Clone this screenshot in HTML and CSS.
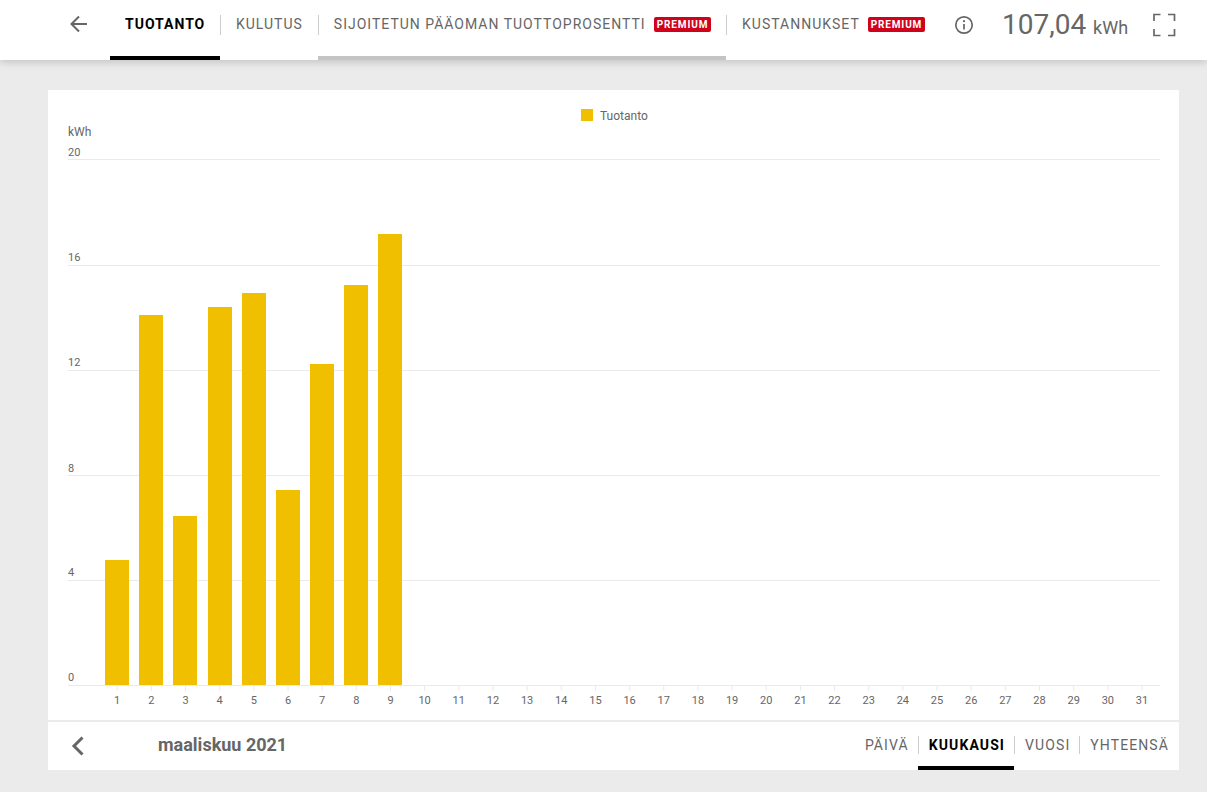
FILE: index.html
```html
<!DOCTYPE html>
<html lang="fi">
<head>
    <meta charset="UTF-8">
    <title>Tuotanto</title>
    <link rel="stylesheet" href="styles.css">
</head>
<body>
    <header class="topbar">
        <button class="back-btn" aria-label="Takaisin">
            <svg width="24" height="24" viewBox="0 0 24 24"><path class="icon-stroke" d="M20 12H5M12 4.5 4.5 12l7.5 7.5"/></svg>
        </button>
        <nav class="tabs">
            <a class="tab tab-active">TUOTANTO</a>
            <a class="tab tab-sep">KULUTUS</a>
            <a class="tab tab-sep tab-locked">SIJOITETUN PÄÄOMAN TUOTTOPROSENTTI <span class="badge">PREMIUM</span></a>
            <a class="tab tab-sep">KUSTANNUKSET <span class="badge">PREMIUM</span></a>
        </nav>
        <div class="summary">
            <svg class="info" width="20" height="20" viewBox="0 0 20 20">
                <circle class="icon-thin" cx="10" cy="10" r="8.2"/>
                <path class="icon-thin" d="M10 9v5.5"/>
                <circle class="icon-dot" cx="10" cy="6.2" r="1.1"/>
            </svg>
            <div class="total">107,04 <span class="unit">kWh</span></div>
            <svg class="expand" width="24" height="24" viewBox="0 0 24 24">
                <path class="icon-thin" d="M2 8V1.5h6.5M16 1.5h6.5V8M2 16v6.5h6.5M16 22.500h6.5V16"/>
            </svg>
        </div>
    </header>

    <main class="card">
        <div class="chart">
            <svg class="plot" id="plot" width="1131" height="630" viewBox="48 90 1131 630"></svg>
        </div>
        <footer class="card-foot">
            <button class="prev-btn" aria-label="Edellinen">
                <svg width="16" height="24" viewBox="0 0 16 24"><path class="icon-bold" d="M12.5 3.5 4 12l8.5 8.5"/></svg>
            </button>
            <div class="period">maaliskuu 2021</div>
            <nav class="ranges">
                <a class="range">PÄIVÄ</a>
                <a class="range range-sep range-active">KUUKAUSI</a>
                <a class="range range-sep">VUOSI</a>
                <a class="range range-sep">YHTEENSÄ</a>
            </nav>
        </footer>
    </main>

    <script src="chart.js"></script>
</body>
</html>
```

FILE: styles.css
```css
* {
    box-sizing: border-box;
}
body {
    margin: 0;
    height: 792px;
    overflow: hidden;
    font-family: Roboto, Arial, sans-serif;
    background-color: #ebebeb;
    color: #666;
}
button {
    background: none;
    border: none;
    padding: 0;
    display: flex;
}
.icon-stroke {
    fill: none;
    stroke: #666;
    stroke-width: 2;
}
.icon-thin {
    fill: none;
    stroke: #666;
    stroke-width: 1.7;
}
.icon-dot {
    fill: #666;
}
.icon-bold {
    fill: none;
    stroke: #666;
    stroke-width: 3;
}

/* top bar */
.topbar {
    height: 60px;
    background-color: white;
    display: flex;
    box-shadow: 0 2px 8px rgba(0, 0, 0, 0.18);
    position: relative;
}
.back-btn {
    margin: 12px 0 0 67px;
    height: 24px;
}
.tabs {
    display: flex;
    margin-left: 19px;
}
.tab {
    display: block;
    position: relative;
    height: 60px;
    padding: 16px 15px 0 16px;
    font-size: 14px;
    line-height: 16px;
    letter-spacing: 1px;
    white-space: nowrap;
}
.tab-active {
    width: 110px;
    padding-left: 15px;
    font-weight: 700;
    color: black;
    border-bottom: 4px solid black;
}
.tab-locked {
    border-bottom: 4px solid #c4c4c4;
}
.tab-sep::before {
    content: "";
    position: absolute;
    left: 0;
    top: 15px;
    height: 20px;
    width: 1px;
    background-color: #ccc;
}
.badge {
    display: inline-block;
    vertical-align: 1px;
    margin-left: 4px;
    width: 57px;
    height: 15px;
    line-height: 15px;
    text-align: center;
    font-size: 10px;
    font-weight: 700;
    letter-spacing: 0.85px;
    color: white;
    background-color: #d0021b;
    border-radius: 2px;
}
.summary {
    display: flex;
    margin-left: 14px;
}
.info {
    margin-top: 15px;
}
.total {
    margin: 8px 0 0 28px;
    font-size: 28px;
    line-height: 34px;
    white-space: nowrap;
}
.unit {
    font-size: 18px;
}
.expand {
    margin: 13px 0 0 24px;
}

/* chart card */
.card {
    margin: 30px 28px 0 48px;
    width: 1131px;
    background-color: white;
}
.chart {
    height: 630px;
}
.plot {
    display: block;
}
.grid-line {
    stroke: #eaeaea;
    stroke-width: 1;
}
.bar {
    fill: #f0bf00;
}
.axis-text {
    font-size: 11px;
    fill: #666;
}
.legend-text {
    font-size: 12px;
    fill: #666;
}
.card-foot {
    height: 50px;
    border-top: 2px solid #ebebeb;
    display: flex;
}
.prev-btn {
    margin: 12px 0 0 22px;
    height: 24px;
}
.period {
    margin: 12px 0 0 72px;
    font-size: 18px;
    line-height: 22px;
    font-weight: 700;
}
.ranges {
    display: flex;
    margin-left: auto;
    margin-right: 1px;
}
.range {
    position: relative;
    height: 48px;
    padding: 15px 9px 0 11px;
    font-size: 14px;
    line-height: 16px;
    letter-spacing: 1.1px;
}
.range-active {
    font-weight: 700;
    color: black;
    border-bottom: 4px solid black;
}
.range-sep::before {
    content: "";
    position: absolute;
    left: 0;
    top: 14px;
    height: 18px;
    width: 1px;
    background-color: #ccc;
}
```

FILE: chart.js
```js
const NS = 'http://www.w3.org/2000/svg';
const plot = document.getElementById('plot');

// bar heights in px above the axis at y=685
const values = [125, 370, 169, 378, 392, 195, 321, 400, 451];

function add(tag, attrs, text) {
    const el = document.createElementNS(NS, tag);
    for (const key in attrs) el.setAttribute(key, attrs[key]);
    if (text !== undefined) el.textContent = text;
    plot.appendChild(el);
}

// legend
add('rect', { x: 581, y: 109, width: 12, height: 12, class: 'bar' });
add('text', { x: 600, y: 120, class: 'legend-text' }, 'Tuotanto');
add('text', { x: 68, y: 136, class: 'legend-text' }, 'kWh');

// y axis
const rows = [[20, 159, 156], [16, 265, 261], [12, 370, 366], [8, 475, 472], [4, 580, 576], [0, 685, 681]];
rows.forEach(([v, y, labelY]) => {
    add('line', { x1: 68, x2: 1160, y1: y + 0.5, y2: y + 0.5, class: 'grid-line' });
    add('text', { x: 68, y: labelY, class: 'axis-text' }, v);
});

// x axis
for (let i = 0; i < 31; i++) {
    const x = 117.2 + i * 34.16;
    add('line', { x1: x, x2: x, y1: 685, y2: 691, class: 'grid-line' });
    add('text', { x: x, y: 704, 'text-anchor': 'middle', class: 'axis-text' }, i + 1);
}

// bars
values.forEach((h, i) => {
    const x = Math.round(105.2 + i * 34.13);
    add('rect', { x: x, y: 685 - h, width: 24, height: h, class: 'bar' });
});
```
